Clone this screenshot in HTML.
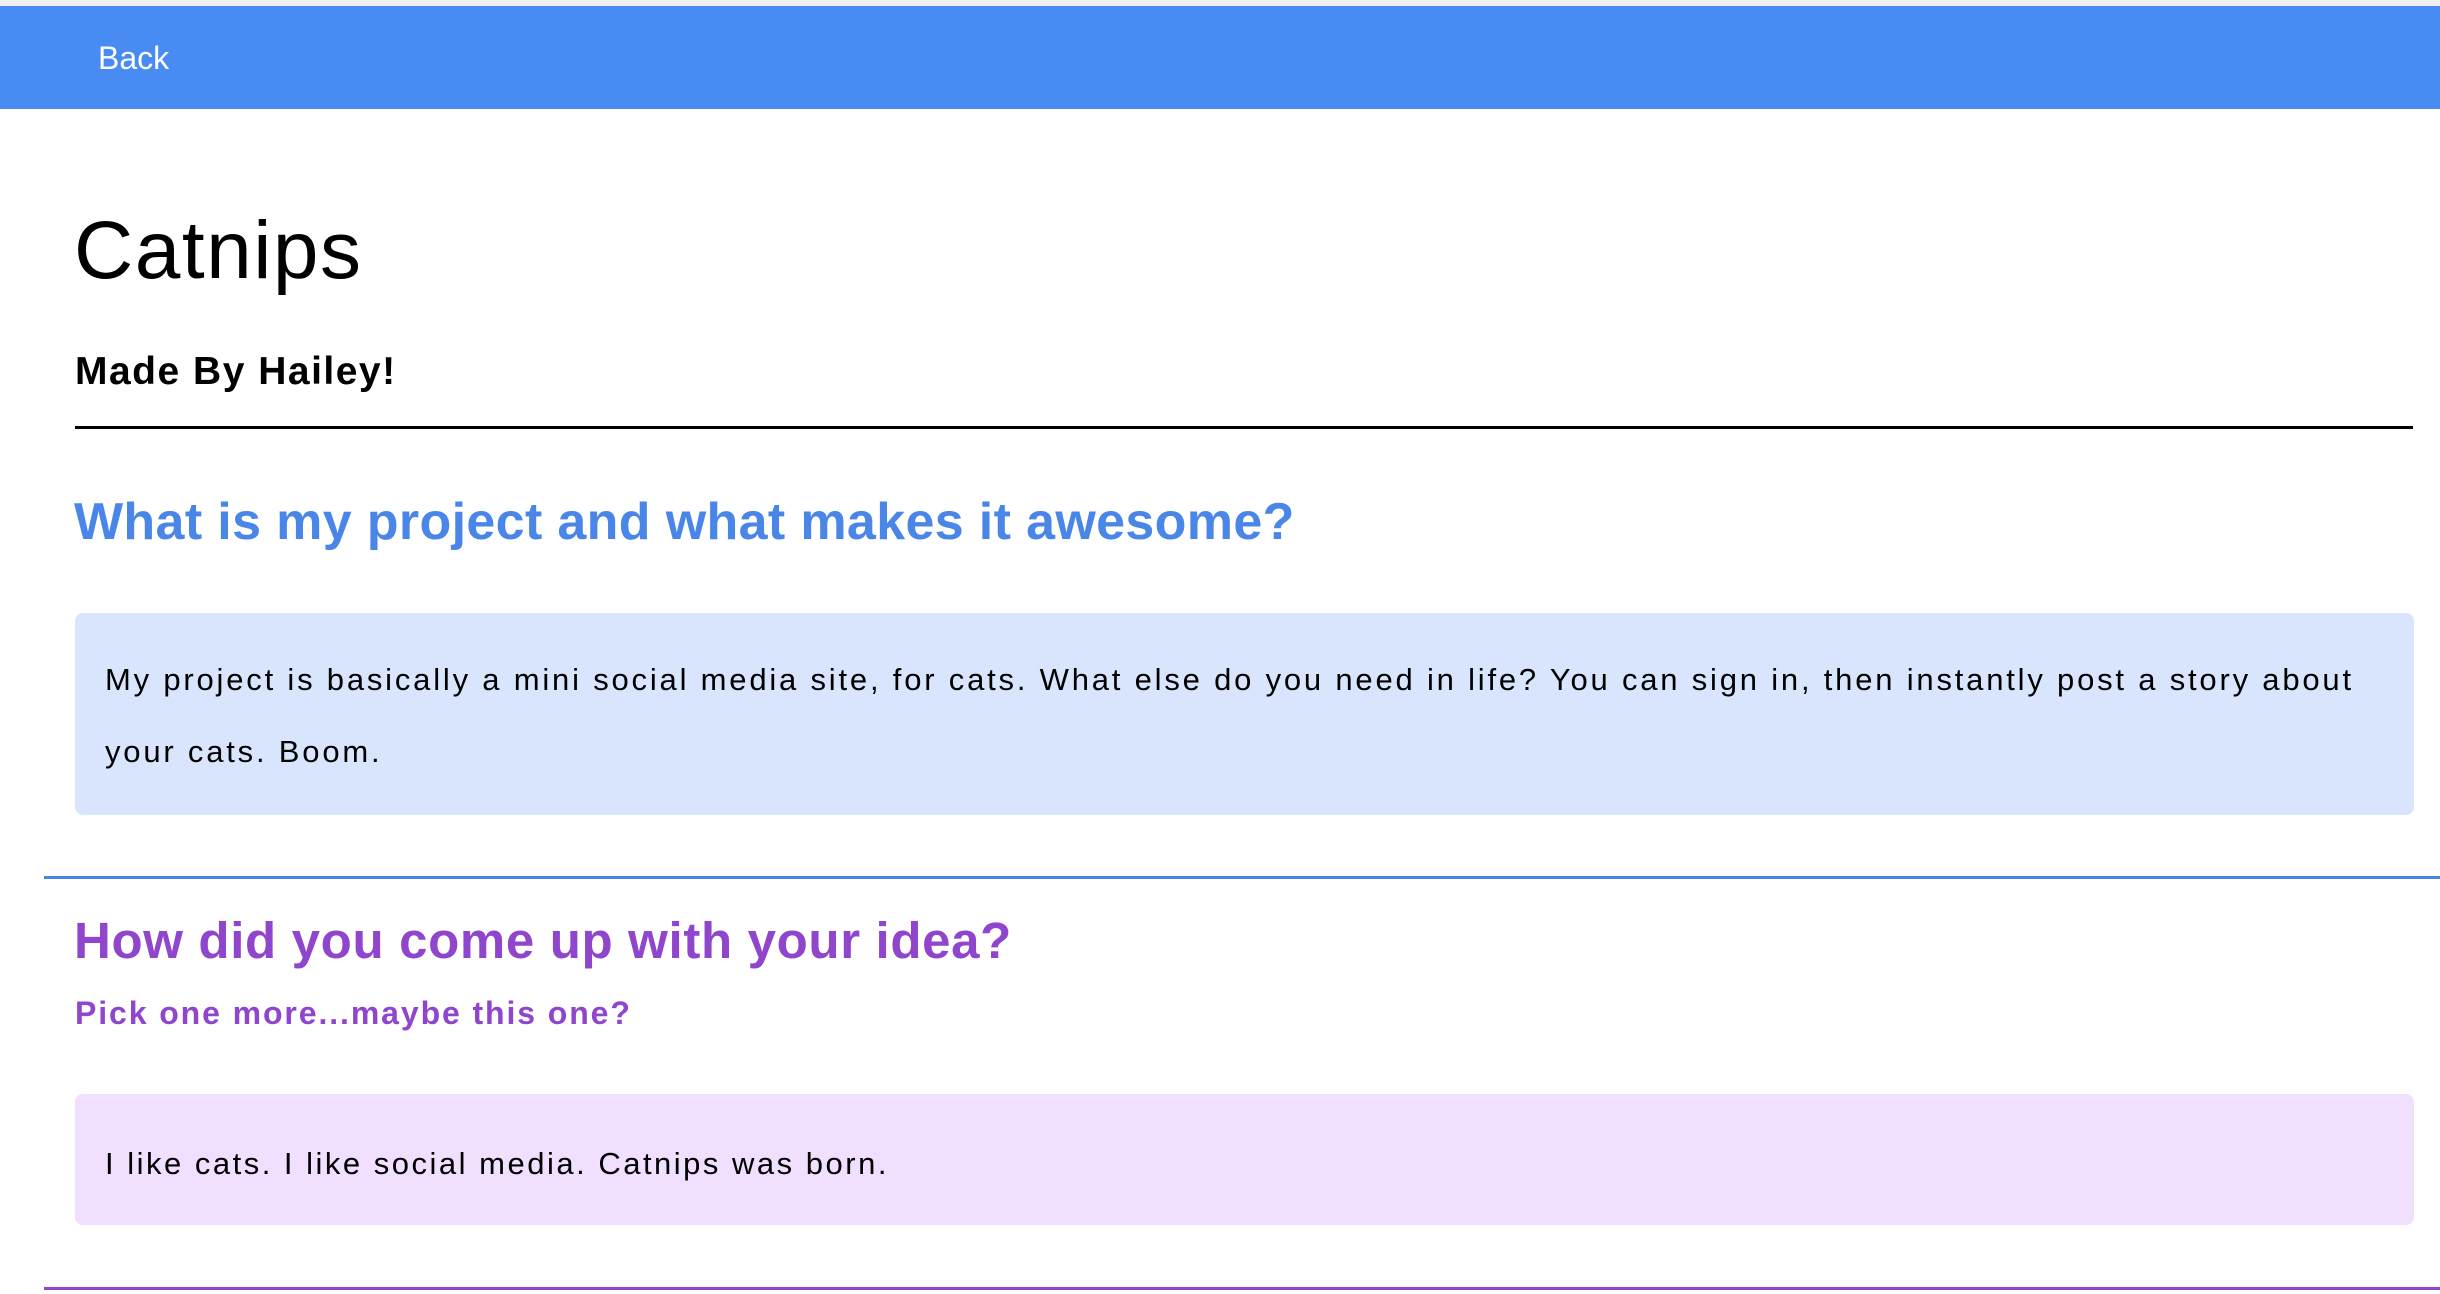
<!DOCTYPE html>
<html><head><meta charset="utf-8"><style>
html,body{margin:0;padding:0;width:2440px;height:1294px;background:#fff;overflow:hidden;position:relative;font-family:"Liberation Sans",sans-serif}
div{position:absolute;white-space:nowrap}
.t{line-height:1}
</style></head><body>
<div style="left:0;top:0;width:2440px;height:6px;background:#efefef"></div>
<div style="left:0;top:6px;width:2440px;height:103px;background:#488bf2"></div>
<div class="t" style="left:98px;top:42px;font-size:32px;color:#fff">Back</div>
<div class="t" style="left:74px;top:210px;font-size:82px;color:#000;letter-spacing:1.5px">Catnips</div>
<div class="t" style="left:75px;top:352px;font-size:39px;font-weight:bold;color:#000;letter-spacing:1.5px">Made By Hailey!</div>
<div style="left:75px;top:426px;width:2338px;height:3px;background:#000"></div>
<div class="t" style="left:74px;top:496px;font-size:52px;font-weight:bold;color:#4a86e8;letter-spacing:0.35px">What is my project and what makes it awesome?</div>
<div style="left:75px;top:613px;width:2339px;height:202px;background:#d8e5fd;border-radius:8px"></div>
<div style="left:105px;top:644px;font-size:31px;line-height:72px;color:#000;letter-spacing:2.8px">My project is basically a mini social media site, for cats. What else do you need in life? You can sign in, then instantly post a story about<br>your cats. Boom.</div>
<div style="left:44px;top:876px;width:2396px;height:3px;background:#4a86e8"></div>
<div class="t" style="left:74px;top:915px;font-size:51px;font-weight:bold;color:#8f45cc;letter-spacing:0.65px">How did you come up with your idea?</div>
<div class="t" style="left:75px;top:997px;font-size:32px;font-weight:bold;color:#8f45cc;letter-spacing:1.9px">Pick one more...maybe this one?</div>
<div style="left:75px;top:1094px;width:2339px;height:131px;background:#f0dffe;border-radius:8px"></div>
<div class="t" style="left:105px;top:1148px;font-size:31px;color:#000;letter-spacing:2.5px">I like cats. I like social media. Catnips was born.</div>
<div style="left:44px;top:1287px;width:2396px;height:3px;background:#8f45cc"></div>
</body></html>
